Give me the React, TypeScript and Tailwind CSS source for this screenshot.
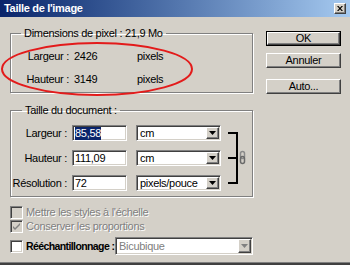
const sunken =
  'border border-t-[#808080] border-l-[#808080] border-r-white border-b-white shadow-[inset_1px_1px_0_#404040,inset_-1px_-1px_0_#d4d0c8]';
const raised =
  'border border-t-white border-l-white border-r-[#404040] border-b-[#404040] shadow-[inset_-1px_-1px_0_#808080,inset_1px_1px_0_#d4d0c8]';
const etched = 'border border-[#808080] shadow-[inset_1px_1px_0_#fff,1px_1px_0_#fff]';
const disabledText = 'text-[#808080] [text-shadow:1px_1px_0_#fff]';

function Arrow({ disabled = false }: { disabled?: boolean }) {
  return (
    <div className={`w-[13px] h-full flex items-center justify-center bg-[#d4d0c8] ${raised}`}>
      <svg width="7" height="4" viewBox="0 0 7 4">
        <path d="M0 0h7L3.5 4z" fill={disabled ? '#808080' : '#000'} />
      </svg>
    </div>
  );
}

function Select({ value, className, disabled = false }: { value: string; className: string; disabled?: boolean }) {
  return (
    <div className={`flex items-stretch bg-white ${sunken} ${className}`}>
      <span className={`flex-1 pl-[3px] flex items-center whitespace-nowrap ${disabled ? 'text-[#808080]' : ''}`}>{value}</span>
      <div className="p-px">
        <Arrow disabled={disabled} />
      </div>
    </div>
  );
}

function Field({ label, value, unit, selected = false }: { label: string; value: string; unit: string; selected?: boolean }) {
  return (
    <div className="flex items-center h-[16px]">
      <span className="w-[56px] text-right whitespace-nowrap">{label}</span>
      <div className={`ml-[5px] w-[55px] h-[16px] bg-white flex items-center pl-[2px] ${sunken}`}>
        <span className={selected ? 'bg-[#0a246a] text-white' : ''}>{value}</span>
      </div>
      <Select value={unit} className="ml-[9px] w-[85px] h-[16px]" />
    </div>
  );
}

function Check({ label, checked = false, disabled = false, bold = false }: { label: string; checked?: boolean; disabled?: boolean; bold?: boolean }) {
  return (
    <div className="flex items-center shrink-0">
      <div className={`w-[13px] h-[13px] flex items-center justify-center ${disabled ? 'bg-[#d4d0c8]' : 'bg-white'} ${sunken}`}>
        {checked && (
          <svg width="7" height="7" viewBox="0 0 7 7">
            <path d="M0 3l2 2 5-5v2L2 7 0 5z" fill={disabled ? '#808080' : '#000'} />
          </svg>
        )}
      </div>
      <span
        className={`ml-[3px] whitespace-nowrap ${disabled ? disabledText : ''} ${
          bold ? 'font-bold w-[87px] text-[10.5px] tracking-[-0.6px]' : ''
        }`}
      >
        {label}
      </span>
    </div>
  );
}

function Button({ label, isDefault = false }: { label: string; isDefault?: boolean }) {
  return (
    <div className={`w-[75px] h-[15px] ${isDefault ? 'border border-black' : ''}`}>
      <div className={`h-full flex items-center justify-center bg-[#d4d0c8] ${raised}`}>{label}</div>
    </div>
  );
}

export default function App() {
  return (
    <div className="relative w-[350px] h-[265px] bg-[#d4d0c8] flex flex-col overflow-hidden font-['Liberation_Sans',Arial,sans-serif] text-[11px] leading-[13px] tracking-[-0.3px] text-black">
      <div className="h-[17px] shrink-0 flex items-center justify-between pl-[4px] pr-[4px] bg-gradient-to-r from-[#0a246a] to-[#a6caf0]">
        <span className="font-bold text-white">Taille de l'image</span>
        <div className={`w-[12px] h-[11px] flex items-center justify-center bg-[#d4d0c8] ${raised}`}>
          <svg width="6" height="5" viewBox="0 0 6 5">
            <path d="M0 0h1.5L3 1.7 4.5 0H6L3.8 2.5 6 5H4.5L3 3.3 1.5 5H0l2.2-2.5z" fill="#000" />
          </svg>
        </div>
      </div>

      <div className="flex-1 flex pl-[10px]">
        <div className="w-[243px] flex flex-col">
          <fieldset className={`mt-[10px] ${etched} pt-[10px] pb-[6px]`}>
            <legend className="ml-[10px] px-[3px]">Dimensions de pixel : 21,9 Mo</legend>
            <div className="flex flex-col gap-[10px]">
              <div className="flex">
                <span className="w-[58px] text-right">Largeur :</span>
                <span className="ml-[5px] w-[63px]">2426</span>
                <span>pixels</span>
              </div>
              <div className="flex">
                <span className="w-[58px] text-right">Hauteur :</span>
                <span className="ml-[5px] w-[63px]">3149</span>
                <span>pixels</span>
              </div>
            </div>
          </fieldset>

          <fieldset className={`mt-[11px] ${etched} pt-[8px] pb-[5px]`}>
            <legend className="ml-[11px] px-[3px]">Taille du document :</legend>
            <div className="flex">
              <div className="flex flex-col gap-[9px]">
                <Field label="Largeur :" value="85,58" unit="cm" selected />
                <Field label="Hauteur :" value="111,09" unit="cm" />
                <Field label="Résolution :" value="72" unit="pixels/pouce" />
              </div>
              <svg width="20" height="56" viewBox="0 0 20 56" className="ml-[7px] mt-[6px]">
                <path d="M0 2h9v50H0M0 27h9" fill="none" stroke="#000" strokeWidth="2" />
                <rect x="12.5" y="20.5" width="4" height="7" rx="2" fill="none" stroke="#8a8a8a" strokeWidth="1.5" />
                <rect x="12.5" y="25.5" width="4" height="7" rx="2" fill="none" stroke="#6a6a6a" strokeWidth="1.5" />
              </svg>
            </div>
          </fieldset>

          <div className="mt-[9px] flex flex-col gap-[1px]">
            <Check label="Mettre les styles à l'échelle" disabled />
            <Check label="Conserver les proportions" checked disabled />
          </div>
          <div className="mt-[4px] flex items-center h-[18px]">
            <Check label="Rééchantillonnage :" bold />
            <Select value="Bicubique" className="ml-[2px] w-[139px] h-[18px]" disabled />
          </div>
        </div>

        <div className="ml-[13px] pt-[14px] flex flex-col">
          <Button label="OK" isDefault />
          <div className="mt-[7px]">
            <Button label="Annuler" />
          </div>
          <div className="mt-[11px]">
            <Button label="Auto..." />
          </div>
        </div>
      </div>

      <div className="h-[3px] shrink-0 bg-[#404040] border-t border-[#808080]" />

      <svg className="absolute left-0 top-0 pointer-events-none" width="350" height="265">
        <ellipse cx="97" cy="69" rx="95" ry="26" fill="none" stroke="#e31b1b" strokeWidth="2" />
      </svg>
    </div>
  );
}
